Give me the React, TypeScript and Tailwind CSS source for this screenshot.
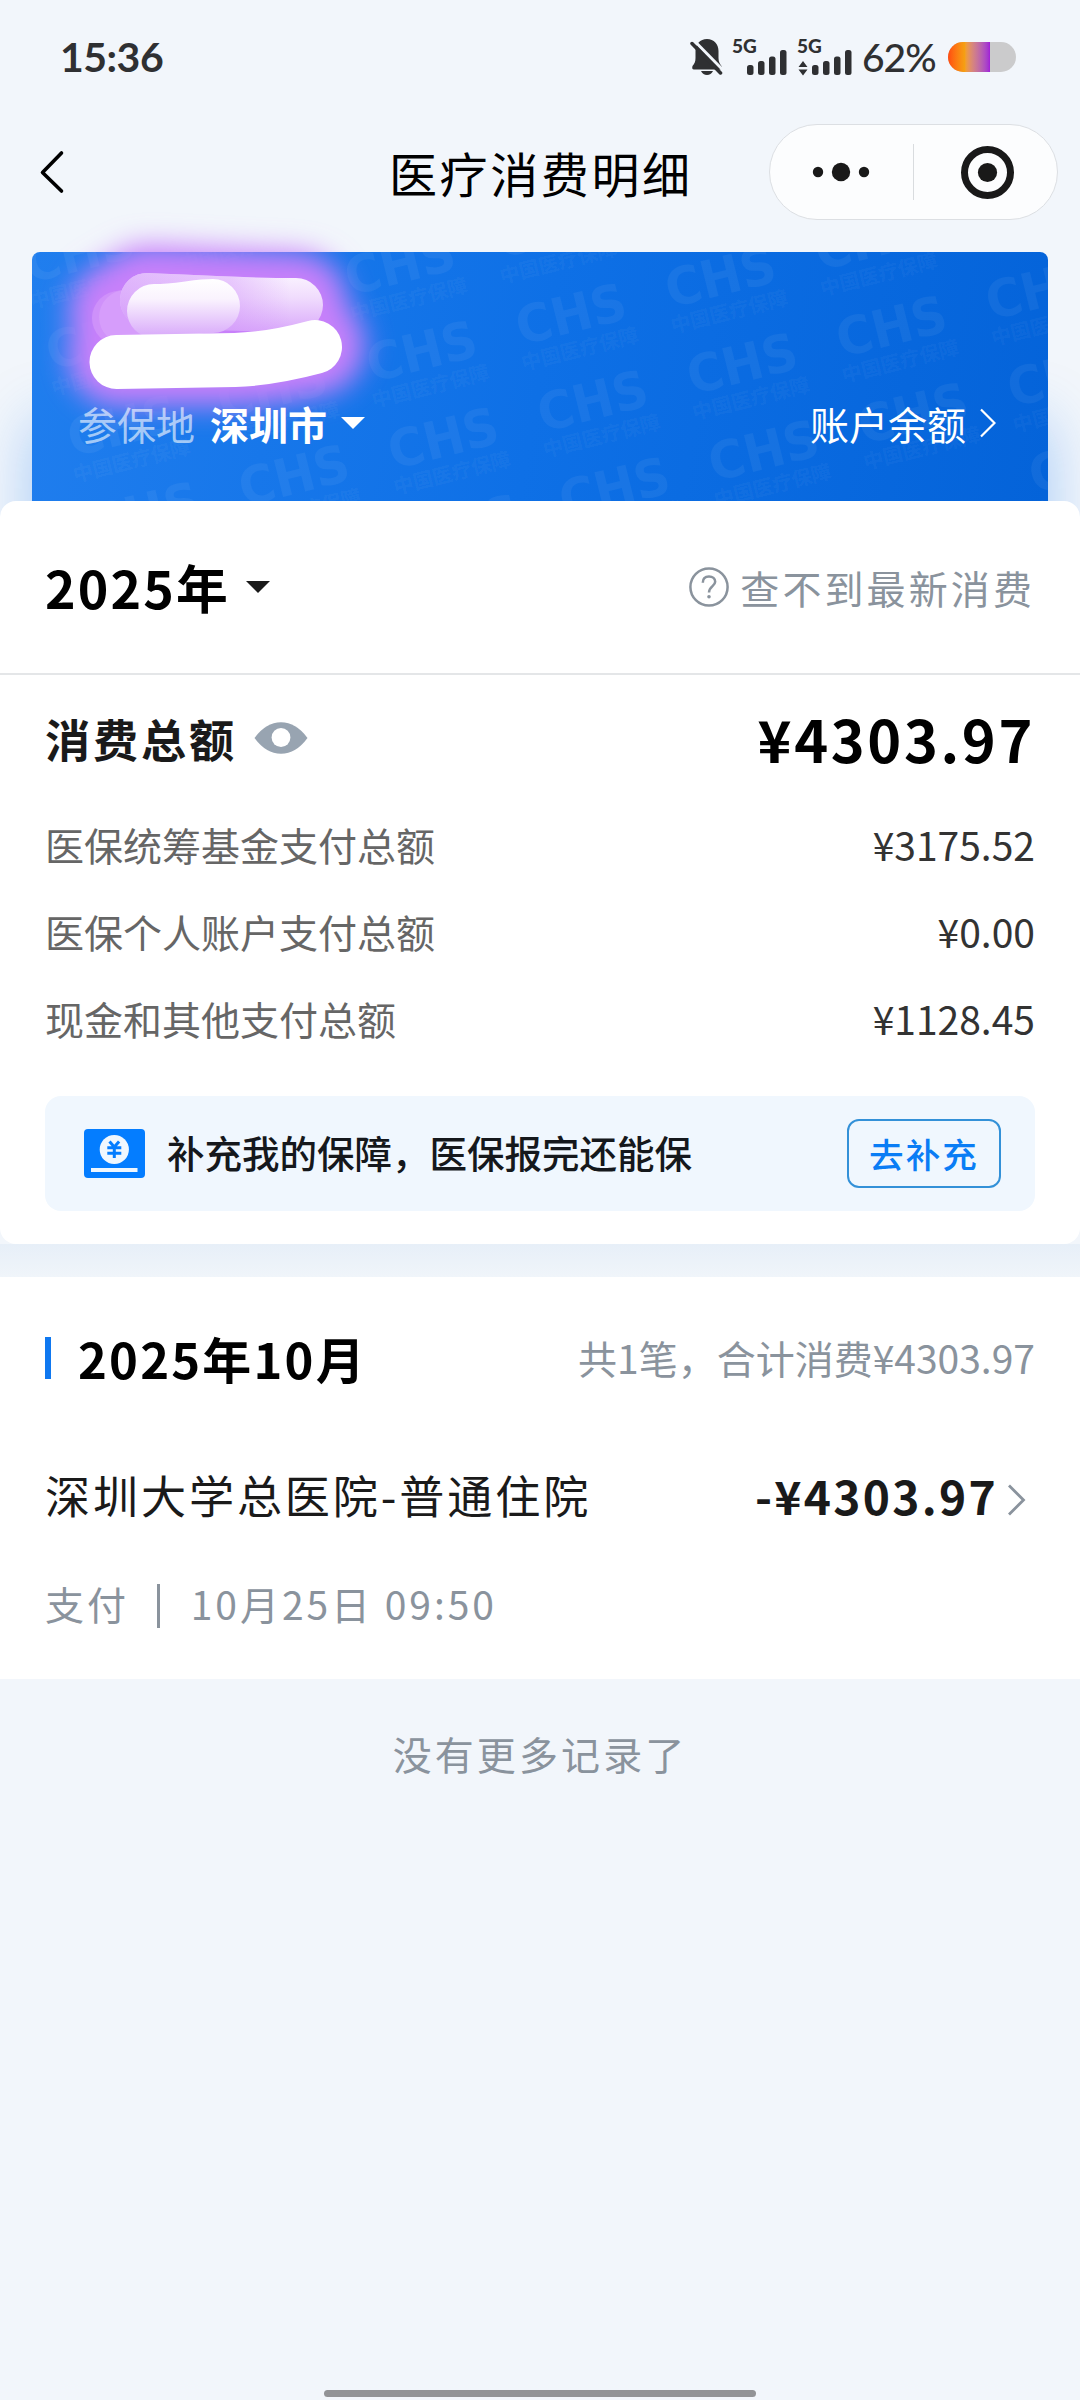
import type { ReactNode } from 'react';

const summaryRows = [
  { label: '医保统筹基金支付总额', value: '¥3175.52' },
  { label: '医保个人账户支付总额', value: '¥0.00' },
  { label: '现金和其他支付总额', value: '¥1128.45' },
];

// [column, row] cells of the tilted grid that touch the card
const watermarkCells = [
  [-4, -3], [-4, -2], [-4, -1], [-4, 0],
  [-3, -3], [-3, -2], [-3, -1], [-3, 0],
  [-2, -2], [-2, -1], [-2, 0], [-2, 1],
  [-1, -2], [-1, -1], [-1, 0], [-1, 1],
  [0, -1], [0, 0], [0, 1],
  [1, -1], [1, 0], [1, 1],
  [2, 0], [2, 1], [2, 2],
];

function SignalBars({ data }: { data?: boolean }) {
  return (
    <div className="relative h-[38px] w-[55px] text-[#2f3032]">
      <span className="absolute -top-[2px] -left-[1px] font-[Lato] text-[19px] leading-[20px] font-black">5G</span>
      <svg className="h-[38px] w-[55px]" viewBox="0 0 55 38" fill="currentColor">
        {data && <path d="M0.5 29 L5 23 L9.5 29 Z M0.5 31.5 L5 37.5 L9.5 31.5 Z" />}
        <rect x="14" y="27" width="6.5" height="10" rx="2.5" />
        <rect x="25" y="23" width="6.5" height="14" rx="2.5" />
        <rect x="36" y="18.5" width="6.5" height="18.5" rx="2.5" />
        <rect x="47" y="12" width="6.5" height="25" rx="2.5" />
      </svg>
    </div>
  );
}

function StatusBar() {
  return (
    <div className="flex h-[124px] items-start justify-between pt-[38px] pr-[64px] pl-[60px] text-[#2f3032]">
      <span className="font-[Lato] text-[41px] leading-[38px] font-bold tracking-[-0.5px]">15:36</span>
      <div className="flex items-center">
        <svg className="mr-[9px] h-[38px] w-[34px]" viewBox="0 0 34 38" fill="#2f3032">
          <path d="M17 1 C24 1 28.5 6 28.5 13 V20 C28.5 24 30 26 31.5 28 Q32.5 31.5 30 31.5 H4 Q1.5 31.5 2.5 28 C4.5 25.5 5.5 24 5.5 20 V13 C5.5 6 10 1 17 1 Z" />
          <path d="M11 33 H23 Q21 37 17 37 Q13 37 11 33 Z" />
          <path d="M4 2.5 L33 32" stroke="#f2f6fb" strokeWidth="3" />
          <path d="M2 5.5 L30.5 35" stroke="#2f3032" strokeWidth="3.5" strokeLinecap="round" />
        </svg>
        <SignalBars />
        <span className="w-[10px]" />
        <SignalBars data />
        <span className="mr-[11px] ml-[9px] w-[75px] font-[Lato] text-[39px] leading-[38px] font-medium tracking-[-1px]">62%</span>
        <div className="flex h-[30px] w-[68px] overflow-hidden rounded-full bg-[#cbcbcc]">
          <div className="h-full w-[42px] bg-linear-to-r from-[#ff4a12] via-[#f5a012] via-40% to-[#a11bd8]" />
        </div>
      </div>
    </div>
  );
}

function NavBar() {
  return (
    <div className="grid h-[96px] grid-cols-[389px_302px_1fr] items-center">
      <svg className="ml-[38px] h-[48px] w-[30px]" viewBox="0 0 30 48" fill="none" stroke="#000" strokeWidth="3.6" strokeLinecap="round" strokeLinejoin="round">
        <path d="M23.5 5 L4.5 24.5 L23.5 43" />
      </svg>
      <h1 className="text-[48px] leading-[60px] font-normal tracking-[2.6px] whitespace-nowrap text-black">医疗消费明细</h1>
      <div className="mr-[22px] flex h-[96px] w-[289px] items-center justify-self-end rounded-full border border-[#dcdfe3] bg-[#fcfdfe]">
        <svg className="h-[60px] w-[143px]" viewBox="0 0 143 60" fill="#191919">
          <circle cx="48" cy="30" r="5.2" />
          <circle cx="71" cy="30" r="9.2" />
          <circle cx="94" cy="30" r="5.2" />
        </svg>
        <span className="h-[56px] w-px bg-[#d9dcdf]" />
        <svg className="h-[60px] w-[143px]" viewBox="0 0 143 60">
          <circle cx="73.5" cy="30.5" r="23" fill="none" stroke="#191919" strokeWidth="7" />
          <circle cx="73.5" cy="30.5" r="9.6" fill="#191919" />
        </svg>
      </div>
    </div>
  );
}

function Watermark() {
  return (
    <svg className="absolute inset-0 h-full w-full" viewBox="0 0 1016 249" fill="#fff" fillOpacity="0.055">
      <g transform="translate(651 106) rotate(-14)">
        {watermarkCells.map(([c, r]) => (
          <g key={`${c}:${r}`} transform={`translate(${c * 154} ${r * 89.5})`}>
            <text x="0" y="38" fontFamily="DejaVu Sans" fontWeight="700" fontSize="52" textLength="112" lengthAdjust="spacingAndGlyphs">CHS</text>
            <text x="-4" y="63" fontFamily="Noto Sans CJK SC" fontWeight="700" fontSize="20">中国医疗保障</text>
          </g>
        ))}
      </g>
    </svg>
  );
}

// brush strokes that hide the account holder
function NameMask() {
  return (
    <svg className="absolute -top-[52px] -left-[32px] h-[260px] w-[440px]" viewBox="0 200 440 260" fill="none" strokeLinecap="round" strokeLinejoin="round">
      <defs>
        <filter id="glow" filterUnits="userSpaceOnUse" x="0" y="200" width="440" height="260">
          <feGaussianBlur stdDeviation="14" />
        </filter>
        <linearGradient id="back" gradientUnits="userSpaceOnUse" x1="0" y1="273" x2="0" y2="335">
          <stop offset="0" stopColor="#fbf5ff" />
          <stop offset="0.4" stopColor="#f0dcfd" />
          <stop offset="1" stopColor="#d7a3fa" />
        </linearGradient>
        <linearGradient id="veil" gradientUnits="userSpaceOnUse" x1="120" y1="0" x2="290" y2="0">
          <stop offset="0" stopColor="#cf8ffa" stopOpacity="0.6" />
          <stop offset="0.65" stopColor="#cf8ffa" stopOpacity="0.4" />
          <stop offset="1" stopColor="#cf8ffa" stopOpacity="0" />
        </linearGradient>
        <linearGradient id="front" gradientUnits="userSpaceOnUse" x1="0" y1="279" x2="0" y2="336">
          <stop offset="0" stopColor="#fff" />
          <stop offset="0.35" stopColor="#faf3fe" />
          <stop offset="1" stopColor="#d9abfa" />
        </linearGradient>
      </defs>
      <g stroke="#c880fa" filter="url(#glow)">
        <path d="M120 312 L147 296 L296 303" strokeWidth="102" />
        <path d="M118 356 L235 356 Q270 355 315 345" strokeWidth="100" />
      </g>
      <path d="M119 318 L150 312" stroke="#d59cfa" strokeOpacity="0.6" strokeWidth="54" />
      <path d="M126 317 L150 312" stroke="#dcaafb" strokeOpacity="0.5" strokeWidth="54" />
      <path d="M147 300 C190 302 240 305 296 305" stroke="url(#back)" strokeWidth="54" />
      <path d="M147 300 C190 302 240 305 296 305" stroke="url(#veil)" strokeWidth="54" />
      <path d="M154 311 C178 311 196 306 213 306" stroke="url(#front)" strokeWidth="54" />
      <path d="M116.5 362 L235 360 Q270 359 315 347" stroke="#fff" strokeWidth="54" />
    </svg>
  );
}

function Caret({ className }: { className: string }) {
  return (
    <svg className={`h-[12px] w-[24px] ${className}`} viewBox="0 0 24 12">
      <path d="M0 0 H24 L12 12 Z" fill="currentColor" />
    </svg>
  );
}

function AccountCard() {
  return (
    <section className="relative mx-[32px] mt-[32px] h-[249px] rounded-t-[8px] bg-linear-[100deg] from-[#207eee] via-[#0e70e6] via-50% to-[#0463d9] shadow-[0_170px_60px_0_rgba(24,119,242,0.35)]">
      <Watermark />
      <NameMask />
      <div className="relative flex items-center pt-[144px] pr-[52px] pl-[46px] text-[39px] leading-[54px] text-white">
        <span className="text-white/60">参保地</span>
        <span className="ml-[15px] font-bold">深圳市</span>
        <Caret className="ml-[14px]" />
        <span className="ml-auto">账户余额</span>
        <svg className="ml-[13px] h-[30px] w-[17px]" viewBox="0 0 17 30" fill="none" stroke="#fff" strokeWidth="2.2">
          <path d="M2 1.5 L15.5 15 L2 28.5" />
        </svg>
      </div>
    </section>
  );
}

function SummaryPanel() {
  return (
    <section className="relative h-[743px] rounded-[16px] bg-white">
      <div className="flex h-[174px] items-center justify-between border-b-2 border-[#e4e6e8] px-[45px]">
        <button className="flex items-center text-[51.84px] leading-[60px] font-bold tracking-[2.2px] text-black">
          2025年
          <Caret className="ml-[16px] text-[#1a1a1a]" />
        </button>
        <div className="flex items-center text-[39px] leading-[54px] tracking-[3.1px] text-[#8a939d]">
          <svg className="mr-[11px] h-[40px] w-[40px]" viewBox="0 0 40 40" fill="none" stroke="#8a939d" strokeWidth="2.5">
            <circle cx="20" cy="20" r="18.6" />
            <path d="M13.8 15.8 C13.8 11.5 16.5 9.5 20 9.5 C23.7 9.5 26.2 11.7 26.2 14.8 C26.2 19 20 19.5 20 25.5" />
            <circle cx="20" cy="29.8" r="1.8" fill="#8a939d" stroke="none" />
          </svg>
          查不到最新消费
        </div>
      </div>

      <div className="flex h-[126px] items-center justify-between px-[45px]">
        <div className="flex items-center pt-[2px] text-[45.1px] leading-[60px] font-bold tracking-[2.88px] text-[#1a1a1a]">
          消费总额
          <svg className="mb-[2px] ml-[17px] h-[32px] w-[54px]" viewBox="0 0 54 32">
            <path d="M0.5 16 Q12 0.3 27 0.3 Q42 0.3 53.5 16 Q42 31.7 27 31.7 Q12 31.7 0.5 16 Z" fill="#98a4b1" />
            <circle cx="27" cy="15.5" r="9.4" fill="#fff" />
          </svg>
        </div>
        <span className="text-[57.6px] leading-[60px] font-bold tracking-[2.6px] text-black">¥4303.97</span>
      </div>

      <dl>
        {summaryRows.map((row) => (
          <div key={row.label} className="flex h-[87px] items-center justify-between px-[45px] pb-[2px] text-[39px] leading-[54px]">
            <dt className="text-[#666]">{row.label}</dt>
            <dd className="text-[#333]">{row.value}</dd>
          </div>
        ))}
      </dl>

      <div className="mx-[45px] mt-[34px] flex h-[115px] items-center rounded-[16px] bg-[#f0f7fe] pr-[34px] pl-[39px]">
        <svg className="h-[49px] w-[61px]" viewBox="0 0 61 49">
          <rect width="61" height="49" rx="4" fill="#047dff" />
          <circle cx="30.3" cy="20.5" r="14.6" fill="#f0f7fe" />
          <path d="M25.5 12.5 L30.3 18 L35.1 12.5 M30.3 18 V29 M23.3 18.8 H37.3 M23.3 24.3 H37.3" fill="none" stroke="#047dff" strokeWidth="3" />
          <rect x="7" y="39" width="46.5" height="4" fill="#f0f7fe" />
        </svg>
        <p className="ml-[22px] pb-[3px] text-[37.5px] leading-[54px] font-medium text-[#15181c]">补充我的保障，医保报完还能保</p>
        <button className="ml-auto flex h-[69px] w-[154px] items-center justify-center rounded-[12px] border-2 border-[#3391d8] pb-[2px] text-[34.56px] leading-[50px] font-medium tracking-[2.1px] text-[#0a7df5]">
          去补充
        </button>
      </div>
    </section>
  );
}

function Muted({ className, children }: { className: string; children: ReactNode }) {
  return <span className={`text-[39px] leading-[54px] text-[#8a939d] ${className}`}>{children}</span>;
}

function MonthRecords() {
  return (
    <section className="relative h-[402px] bg-white px-[45px] pt-[51px]">
      <div className="flex h-[60px] items-center">
        <span className="h-[42px] w-[6px] bg-[#0f78f0]" />
        <h2 className="ml-[27px] text-[48.96px] leading-[60px] font-bold tracking-[2.2px] text-black">2025年10月</h2>
        <Muted className="ml-auto pb-[3px]">共1笔，合计消费¥4303.97</Muted>
      </div>
      <div className="mt-[77px] flex h-[60px] items-center text-[#1a1a1a]">
        <span className="text-[45.1px] leading-[60px] tracking-[2.88px]">深圳大学总医院-普通住院</span>
        <span className="ml-auto text-[46.08px] leading-[60px] font-bold tracking-[2.3px]">-¥4303.97</span>
        <svg className="mt-[9px] mr-[9px] ml-[8px] h-[32px] w-[20px]" viewBox="0 0 20 32" fill="none" stroke="#8a939d" strokeWidth="2.8">
          <path d="M3 1.5 L17.5 16 L3 30.5" />
        </svg>
      </div>
      <div className="mt-[51px] flex items-center">
        <Muted className="tracking-[2.88px]">支付</Muted>
        <span className="mt-[6px] mr-[31px] ml-[28px] h-[44px] w-[3px] bg-[#8a939d]" />
        <Muted className="tracking-[2.95px]">10月25日 09:50</Muted>
      </div>
    </section>
  );
}

export default function App() {
  return (
    <div lang="zh-CN" className="flex h-[2400px] w-[1080px] flex-col overflow-hidden bg-[#f2f6fb] font-['Noto_Sans_CJK_SC',sans-serif]">
      <StatusBar />
      <NavBar />
      <AccountCard />
      <SummaryPanel />
      <div className="h-[33px] bg-linear-to-b from-[#e7eff8] to-[#f0f5fa]" />
      <MonthRecords />
      <Muted className="mt-[47px] text-center tracking-[3.1px]">没有更多记录了</Muted>
      <div className="mx-auto mt-auto mb-[3px] h-[7px] w-[432px] rounded-full bg-[#929396]" />
    </div>
  );
}
